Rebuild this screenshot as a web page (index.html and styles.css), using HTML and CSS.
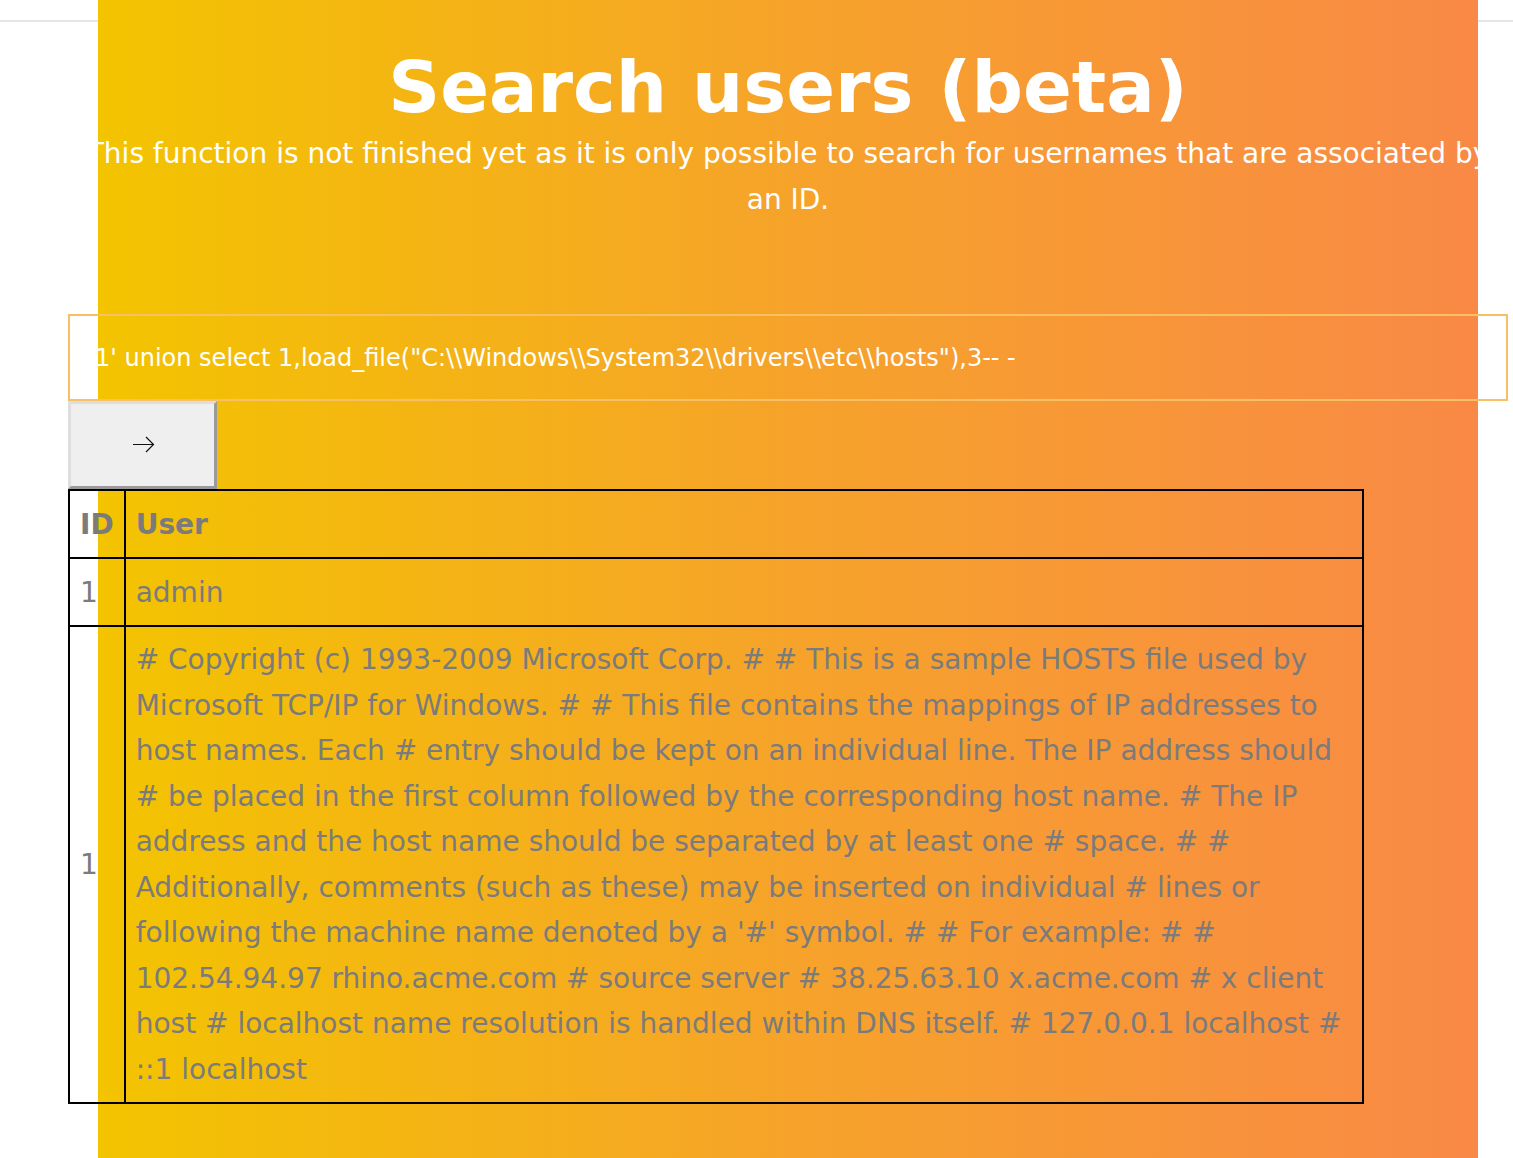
FILE: index.html
```html
<!DOCTYPE html>
<html lang="en">
<head>
<meta charset="utf-8">
<title>Search users (beta)</title>
<link rel="stylesheet" href="styles.css">
</head>
<body>
<header class="topbar"></header>
<main class="hero">
  <div class="content">
    <h1 class="title">Search users (beta)</h1>
    <p class="lead">This function is not finished yet as it is only possible to search for usernames that are associated by an ID.</p>
    <form class="search">
      <input class="query" type="text" value="1' union select 1,load_file(&quot;C:\\Windows\\System32\\drivers\\etc\\hosts&quot;),3-- -">
      <button class="go" type="button" aria-label="Search"><svg class="arrow" width="23" height="17" viewBox="0 0 23 17"><path d="M1 8.5H21.5M14 1L21.5 8.5L14 16" fill="none" stroke="#111" stroke-width="1.2"/></svg></button>
    </form>
    <table class="results">
      <thead>
        <tr><th class="col-id">ID</th><th>User</th></tr>
      </thead>
      <tbody>
        <tr><td class="col-id">1</td><td>admin</td></tr>
        <tr><td class="col-id">1</td><td># Copyright (c) 1993-2009 Microsoft Corp. # # This is a sample HOSTS file used by Microsoft TCP/IP for Windows. # # This file contains the mappings of IP addresses to host names. Each # entry should be kept on an individual line. The IP address should # be placed in the first column followed by the corresponding host name. # The IP address and the host name should be separated by at least one # space. # # Additionally, comments (such as these) may be inserted on individual # lines or following the machine name denoted by a '#' symbol. # # For example: # # 102.54.94.97 rhino.acme.com # source server # 38.25.63.10 x.acme.com # x client host # localhost name resolution is handled within DNS itself. # 127.0.0.1 localhost # ::1 localhost</td></tr>
      </tbody>
    </table>
  </div>
</main>
</body>
</html>
```
FILE: styles.css
```css
html, body {
  margin: 0;
  padding: 0;
  background: #ffffff;
  font-family: "DejaVu Sans", Verdana, sans-serif;
  overflow: hidden;
}

.topbar {
  height: 20px;
  border-bottom: 2px solid #e5e5e5;
}

.hero {
  position: relative;
  margin: -22px 35px 0 98px;
  padding: 44px 0 80px;
  min-height: 1200px;
  background: linear-gradient(90deg, #f3c400 0%, #f6a32a 50%, #f98946 100%);
}

.content {
  margin: 0 -30px;
}

.title {
  margin: 0;
  font-size: 72px;
  line-height: 1.2;
  font-weight: bold;
  color: #ffffff;
  text-align: center;
}

.lead {
  margin: 1px 0 0;
  font-size: 28px;
  line-height: 45.5px;
  color: #ffffff;
  text-align: center;
}

.search {
  margin: 92px 0 0;
  display: flex;
  flex-direction: column;
  align-items: flex-start;
}

.query {
  box-sizing: border-box;
  width: 100%;
  height: 87px;
  margin: 0;
  padding: 0 0 0 25px;
  border: 2px solid #f8c064;
  background: transparent;
  color: #ffffff;
  font-family: "DejaVu Sans", Verdana, sans-serif;
  font-size: 24px;
  outline: none;
}

.go {
  box-sizing: border-box;
  width: 149px;
  height: 88px;
  margin: 0;
  padding: 0;
  display: flex;
  align-items: center;
  justify-content: center;
  background: #efefef;
  border-style: solid;
  border-width: 3px;
  border-color: #dedede #9a9a9a #9a9a9a #dedede;
}

.arrow {
  display: block;
  margin: -2px 0 0 1px;
}

.results {
  width: 90%;
  border-collapse: collapse;
  border: 2px solid #000000;
  color: #7b7b7b;
  font-size: 28px;
  line-height: 45.5px;
}

.results th,
.results td {
  border: 2px solid #000000;
  padding: 10px;
  text-align: left;
}

.results th {
  font-weight: bold;
  height: 46px;
}

.results td {
  height: 46px;
}

.results .col-id {
  width: 1px;
}
```
